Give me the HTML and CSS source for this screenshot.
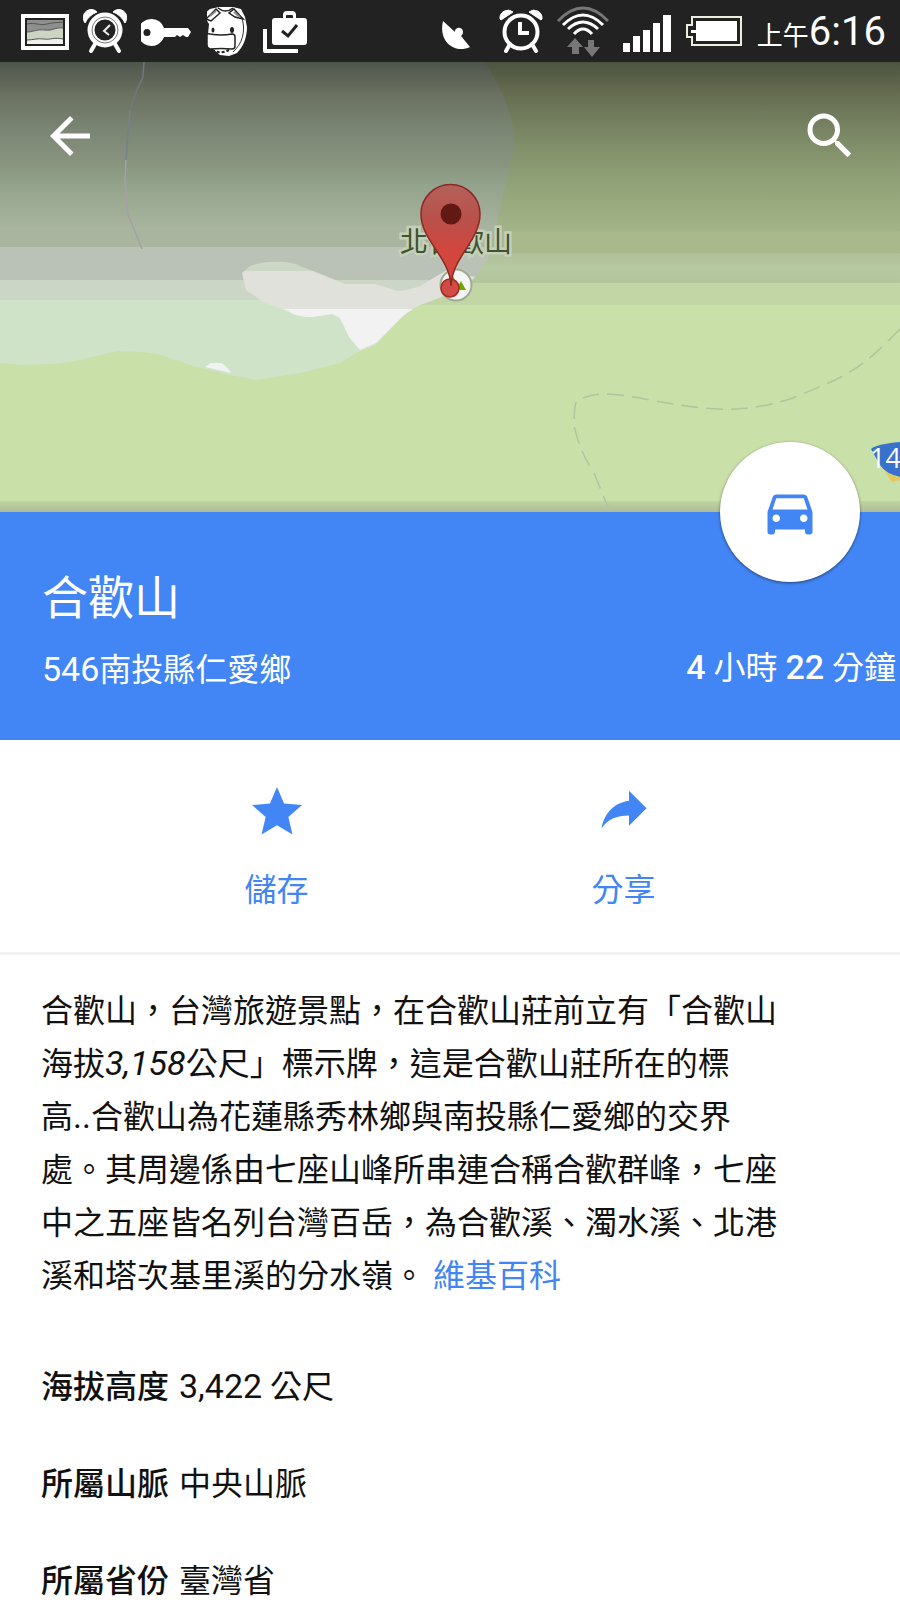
FILE: index.html
```html
<!DOCTYPE html>
<html lang="zh-Hant">
<head>
<meta charset="utf-8">
<meta name="viewport" content="width=device-width, initial-scale=1">
<title>合歡山</title>
<link rel="stylesheet" href="styles.css">
</head>
<body>
<div class="status-bar">
  <div class="status-group">
    <svg width="48" height="62" viewBox="0 0 48 62" aria-hidden="true">
      <rect y="14" width="48" height="36" fill="#fff"/>
      <rect x="4" y="18" width="40" height="28" fill="#222"/>
      <rect x="6" y="20" width="36" height="24" fill="#f0f1ee"/>
      <path d="M6 20h36v8c-8-1-10 3-18 2s-12 2-18 2z" fill="#8d8f8d"/>
      <path d="M6 32c6 0 10-3 18-2s10-3 18-2v11c-9-2-12 1-19 0s-11 1-17 1z" fill="#cbd5c2"/>
      <path d="M6 24c8-2 12 2 20 0s10-1 16-2M6 32c6 0 10-3 18-2s10-3 18-2M6 40c6 0 10-2 17-1s10-2 19 0" fill="none" stroke="#555" stroke-width="1"/>
    </svg>
    <svg width="44" height="62" viewBox="0 0 44 62" aria-hidden="true">
      <path d="M1 21a8 8 0 0 1 13-9 22 22 0 0 0-12 11zM43 21a8 8 0 0 0-13-9 22 22 0 0 1 12 11z" fill="#fff" stroke="#fff" stroke-width="1"/>
      <path d="M12 44l-4 7M32 44l4 7" stroke="#fff" stroke-width="4" stroke-linecap="round"/>
      <circle cx="22" cy="30" r="14" fill="none" stroke="#fff" stroke-width="7"/>
      <circle cx="22" cy="30" r="13" fill="none" stroke="#777" stroke-width="1"/>
      <path d="M27 25l-6 6 5 4" fill="none" stroke="#eee" stroke-width="2"/>
    </svg>
    <svg width="52" height="62" viewBox="0 0 52 62" aria-hidden="true">
      <path fill="#fff" fill-rule="evenodd" d="M11 19a13.500 13.500 0 1 0 12 18h11l2-2 3 2 3-2 3 2h2l3-5-3-4H23a13.500 13.500 0 0 0-12-9zM6 29a3.500 3.500 0 1 1 0 7 3.500 3.500 0 0 1 0-7z"/>
    </svg>
    <svg width="42" height="62" viewBox="0 0 42 62" aria-hidden="true">
      <g transform="translate(-2 0)">
      <path d="M3 34L4 24 1 19 0 13 5 9l9-2 14 0 8 2 4 8 2 10c0 11-4 20-10 26l-8 3-9-1-7-6-4-3z" fill="#fff"/>
      <path d="M37 18c4 14 0 26-9 34" fill="none" stroke="#333" stroke-width="1"/>
      <path d="M1 19L11 9l4 4-9 8zM38 19L29 9l-5 4 6 4zM13 8c5 4 10 4 15 0" fill="none" stroke="#222" stroke-width="1.500"/>
      <path d="M5 16l6-5M29 12l6 5" stroke="#888" stroke-width="2"/>
      <path d="M2 35q0-2 3-1 11 2 22 0 3 0 3 3v9q0 3-3 3-11-1-22 0-3-1-3-4z" fill="#fff" stroke="#222" stroke-width="1.500"/>
      <path d="M7 50c6 3 11 3 17 0" fill="none" stroke="#222" stroke-width="2" stroke-dasharray="3 2"/>
      <ellipse cx="8" cy="30" rx="1.500" ry="2.500" fill="#222"/><ellipse cx="27" cy="30" rx="2" ry="3" fill="#222"/>
      </g>
    </svg>
    <svg width="44" height="62" viewBox="0 0 44 62" aria-hidden="true">
      <path d="M2 29v22h33" fill="none" stroke="#fff" stroke-width="4" stroke-linejoin="round"/>
      <path fill="#fff" fill-rule="evenodd" d="M12 18h8v-3q0-4 4-4h5q4 0 4 4v3h8q3 0 3 3v21q0 3-3 3H12q-3 0-3-3V21q0-3 3-3zm11 0h7v-2q0-1-1-1h-5q-1 0-1 1z"/>
      <path d="M19 31l6 5 9-11" fill="none" stroke="#222" stroke-width="3"/>
    </svg>
  </div>
  <div class="status-group">
    <svg width="44" height="62" viewBox="0 0 44 62" aria-hidden="true">
      <path fill="#fff" d="M2 21l12 11c-1-5 8-6 8 0 0 2-1 3-2 4l9 11C14 54-3 42 2 21z"/>
    </svg>
    <svg width="44" height="62" viewBox="0 0 44 62" aria-hidden="true">
      <path d="M1 19a8 8 0 0 1 13-7L2 20zM43 19a8 8 0 0 0-13-7l12 8z" fill="#fff" stroke="#fff" stroke-width="1"/>
      <path d="M11 44l-4 7M33 44l4 7" stroke="#fff" stroke-width="4" stroke-linecap="round"/>
      <circle cx="22" cy="32" r="16.500" fill="none" stroke="#fff" stroke-width="4"/>
      <path d="M21 22v11h9" fill="none" stroke="#fff" stroke-width="4"/>
    </svg>
    <svg width="52" height="62" viewBox="0 0 52 62" aria-hidden="true">
      <g fill="none" stroke="#fff" stroke-width="3">
        <path d="M1 21q25-26 50 0" stroke="#777"/>
        <path d="M6 25q20-20 40 0M11 29q15-14 30 0M17 34q9-10 18 0"/>
      </g>
      <path fill="#777" d="M18 38l8 9h-4v7h-7v-7h-5zM31 40h6v7h6l-8 10-8-10h4z"/>
    </svg>
    <svg width="48" height="62" viewBox="0 0 48 62" aria-hidden="true">
      <path fill="#fff" d="M0 43h7v9H0zM10 36h7v16h-7zM20 30h7v22h-7zM30 23h7v29h-7zM40 15h8v37h-8z"/>
    </svg>
    <svg width="58" height="62" viewBox="0 0 58 62" aria-hidden="true">
      <path d="M7 17h49v28H7v-8H2V25h5z" fill="none" stroke="#ececdf" stroke-width="2"/>
      <path fill="#fff" d="M11 21h41v20H11v-8H6v-3h5z"/>
    </svg>
    <div class="clock"><span class="clock-period">上午</span><time class="clock-time">6:16</time></div>
  </div>
</div>

<header class="map">
  <svg class="map-canvas" viewBox="0 62 900 450" preserveAspectRatio="xMidYMid slice" role="img" aria-label="地圖">
    <defs>
      <linearGradient id="park" gradientUnits="userSpaceOnUse" x1="0" y1="62" x2="0" y2="512">
        <stop offset="0" stop-color="#4c533f"/><stop offset=".07" stop-color="#666d52"/><stop offset=".15" stop-color="#788463"/>
        <stop offset=".21" stop-color="#86956e"/><stop offset=".31" stop-color="#98a97e"/><stop offset=".376" stop-color="#a3b488"/>
        <stop offset=".377" stop-color="#a9b98b"/><stop offset=".425" stop-color="#a9b98b"/><stop offset=".426" stop-color="#b1c09b"/>
        <stop offset=".455" stop-color="#b5c89f"/><stop offset=".49" stop-color="#b2c69e"/><stop offset=".491" stop-color="#c1d5a5"/>
        <stop offset=".539" stop-color="#c1d5a5"/><stop offset=".54" stop-color="#c9e0a9"/><stop offset=".975" stop-color="#c9e0a9"/>
        <stop offset=".976" stop-color="#c0d4a3"/><stop offset="1" stop-color="#aebc94"/>
      </linearGradient>
      <linearGradient id="valley" gradientUnits="userSpaceOnUse" x1="0" y1="62" x2="0" y2="512">
        <stop offset="0" stop-color="#4e554b"/><stop offset=".07" stop-color="#6a7161"/><stop offset=".15" stop-color="#7a8573"/>
        <stop offset=".23" stop-color="#89957f"/><stop offset=".27" stop-color="#93a28c"/><stop offset=".34" stop-color="#a2af98"/>
        <stop offset=".37" stop-color="#a9b59f"/><stop offset=".411" stop-color="#a9b59f"/><stop offset=".412" stop-color="#bac2b7"/>
        <stop offset=".484" stop-color="#bac2b7"/><stop offset=".485" stop-color="#ccd6c7"/><stop offset=".528" stop-color="#ccd6c7"/>
        <stop offset=".529" stop-color="#cfe3c8"/><stop offset="1" stop-color="#cfe3c8"/>
      </linearGradient>
      <linearGradient id="rock" gradientUnits="userSpaceOnUse" x1="0" y1="62" x2="0" y2="512">
        <stop offset=".464" stop-color="#ccd7c5"/><stop offset=".465" stop-color="#e1e1db"/>
        <stop offset=".548" stop-color="#e1e1db"/><stop offset=".549" stop-color="#f2f2f2"/>
      </linearGradient>
      <linearGradient id="pin" x1="0" y1="0" x2="0" y2="1">
        <stop offset="0" stop-color="#b4615a"/><stop offset=".35" stop-color="#b9504a"/><stop offset=".65" stop-color="#d2463e"/><stop offset="1" stop-color="#d2463e"/>
      </linearGradient>
    </defs>
    <rect y="62" width="900" height="450" fill="url(#park)"/>
    <path fill="url(#valley)" d="M0 62H485Q502 90 506 103 515 128 515 140 513 155 505 185L497 222 488 259 470 283 447 295 420 305Q405 314 400 319L376 345 358 352 340 363 300 373 257 380 230 375 190 365 158 354Q140 351 118 351L70 362Q35 367 0 363z"/>
    <path fill="url(#rock)" d="M242 273L250 266Q262 262 270 262 290 261 300 266L318 273 345 284 375 284 398 291Q410 290 420 286L447 270 475 277Q465 289 447 295L420 305Q405 313 400 319L376 343 360 350 349 337 340 318 332 314 313 317Q295 317 288 311L265 303 246 290zM205 367L211 363 221 363Q227 366 231 373z"/>
    <path fill="none" stroke="#76757a" stroke-width="1.500" d="M144 62L143 77 136 92 130 110"/>
    <path fill="none" stroke="#74828a" stroke-width="1.500" d="M130 110L128 132 126 160"/>
    <path fill="none" stroke="#a2a2a4" stroke-width="1.500" d="M126 160L125 180 127 212 142 249"/>
    <path fill="none" stroke="#b3c49d" stroke-width="1.500" stroke-dasharray="17 8" d="M900 329C860 370 850 375 790 399 740 414 710 411 650 400 600 390 590 394 577 401Q574 404 574 425 579 450 594 473L610 512"/>
    <text class="map-label" x="400" y="252">北合歡山</text>
    <circle cx="456" cy="285" r="15.500" fill="#f5f5f3" stroke="#9fac93" stroke-width="2"/>
    <path d="M452 274l8 16h-16zM461 281l5 9h-10z" fill="#70a500"/>
    <circle cx="450" cy="288" r="9" fill="#d24a44" stroke="#a92724" stroke-width="1.500"/>
    <path d="M451 286C450 257 421 241 421 214A29.500 29.500 0 0 1 480 214C480 241 452 257 451 286z" fill="url(#pin)" stroke="#8c2824" stroke-width="1.500"/>
    <circle cx="451" cy="214" r="10.500" fill="#621813"/>
    <path d="M871 449Q876 444 900 442V477Q886 474 880 465z" fill="#3872cc"/>
    <path d="M884 470l8 12 8-2v-3q-10-1-16-7z" fill="#e8c657"/>
    <text class="route-label" x="870" y="468">14</text>
  </svg>
  <nav class="toolbar">
    <button class="icon-button" type="button" aria-label="返回">
      <svg width="60" height="60" viewBox="0 0 24 24" fill="#fff"><path d="M20 11H7.830l5.590-5.590L12 4l-8 8 8 8 1.410-1.410L7.830 13H20v-2z"/></svg>
    </button>
    <button class="icon-button" type="button" aria-label="搜尋">
      <svg width="60" height="60" viewBox="0 0 24 24" fill="#fff"><path d="M15.500 14h-.79l-.28-.27A6.471 6.471 0 0 0 16 9.500 6.500 6.500 0 1 0 9.500 16c1.610 0 3.090-.59 4.230-1.570l.27.28v.79l5 4.990L20.490 19l-4.990-5zm-6 0C7.010 14 5 11.990 5 9.500S7.010 5 9.500 5 14 7.010 14 9.500 11.990 14 9.500 14z"/></svg>
    </button>
  </nav>
</header>

<main>
  <section class="place">
    <button class="fab" type="button" aria-label="開車路線">
      <svg width="60" height="60" viewBox="0 0 24 24" fill="#4285f4"><path d="M18.920 6.010C18.720 5.420 18.160 5 17.500 5h-11c-.66 0-1.210.42-1.420 1.010L3 12v8c0 .55.45 1 1 1h1c.55 0 1-.45 1-1v-1h12v1c0 .55.45 1 1 1h1c.55 0 1-.45 1-1v-8l-2.080-5.990zM6.500 16c-.83 0-1.500-.67-1.500-1.500S5.670 13 6.500 13s1.500.67 1.500 1.500S7.330 16 6.500 16zm11 0c-.83 0-1.500-.67-1.500-1.500s.67-1.500 1.500-1.500 1.500.67 1.500 1.500-.67 1.500-1.500 1.500zM5 11l1.500-4.500h11L19 11H5z"/></svg>
    </button>
    <h1 class="place-name">合歡山</h1>
    <div class="place-row">
      <p class="address"><span class="num">546</span>南投縣仁愛鄉</p>
      <p class="duration"><b class="num">4</b> 小時 <b class="num">22</b> 分鐘</p>
    </div>
  </section>

  <div class="actions">
    <button class="action" type="button">
      <svg width="60" height="60" viewBox="0 0 24 24" fill="#4285f4"><path d="M12 17.270L18.180 21l-1.640-7.030L22 9.240l-7.190-.61L12 2 9.190 8.630 2 9.240l5.460 4.730L5.820 21z"/></svg>
      <span>儲存</span>
    </button>
    <button class="action" type="button">
      <svg width="60" height="60" viewBox="0 1.500 24 24" fill="#4285f4"><path d="M14 9V5l7 7-7 7v-4.100c-5 0-8.500 1.600-11 5.100 1-5 4-10 11-11z"/></svg>
      <span>分享</span>
    </button>
  </div>

  <article class="details">
    <p class="summary">合歡山，台灣旅遊景點，在合歡山莊前立有「合歡山<br>海拔<i class="num">3,158</i>公尺」標示牌，這是合歡山莊所在的標<br>高<span class="num">..</span>合歡山為花蓮縣秀林鄉與南投縣仁愛鄉的交界<br>處。其周邊係由七座山峰所串連合稱合歡群峰，七座<br>中之五座皆名列台灣百岳，為合歡溪、濁水溪、北港<br>溪和塔次基里溪的分水嶺。 <a class="link" href="#wiki">維基百科</a></p>
    <dl class="facts">
      <div class="fact"><dt>海拔高度</dt><dd><span class="num">3,422</span> 公尺</dd></div>
      <div class="fact"><dt>所屬山脈</dt><dd>中央山脈</dd></div>
      <div class="fact"><dt>所屬省份</dt><dd>臺灣省</dd></div>
    </dl>
  </article>
</main>
</body>
</html>
```
FILE: styles.css
```css
* {
  box-sizing: border-box;
}

body,
h1,
p,
dl,
dd {
  margin: 0;
}

body {
  background: #fff;
  color: #111;
  font-family: Roboto, "Noto Sans CJK TC", sans-serif;
  font-size: 32px;
  line-height: 53px;
  overflow-x: hidden;
}

button {
  padding: 0;
  border: 0;
  background: none;
  font: inherit;
  cursor: pointer;
}

svg {
  display: block;
  flex: none;
}

.num {
  font-size: 34px;
  line-height: 1;
}

/* Status bar */
.status-bar {
  display: flex;
  justify-content: space-between;
  height: 62px;
  padding: 0 14px 0 21px;
  background: #222;
  color: #fff;
}

.status-group {
  display: flex;
  gap: 14px;
}

.clock {
  line-height: 68px;
  white-space: nowrap;
}

.clock-period {
  font-size: 26px;
}

.clock-time {
  font-size: 40px;
  line-height: 1;
}

/* Map header */
.map {
  position: relative;
  height: 450px;
  background: #c9e0a9;
}

.map-canvas {
  width: 100%;
  height: 100%;
}

.map-label {
  fill: #405330;
  stroke: #c5d0b9;
  stroke-width: 5px;
  paint-order: stroke;
  font-size: 28px;
}

.route-label {
  fill: #fff;
  font-family: "Open Sans", sans-serif;
  font-size: 27px;
}

.toolbar {
  position: absolute;
  inset: 0 0 auto;
  display: flex;
  justify-content: space-between;
  padding: 44px 40px;
}

.icon-button {
  width: 60px;
  height: 60px;
}

/* Place banner */
.place {
  position: relative;
  padding: 58px 4px 43px 42px;
  background: #4285f4;
  color: #fff;
}

.fab {
  position: absolute;
  top: -70px;
  right: 40px;
  display: grid;
  place-items: center;
  width: 140px;
  height: 140px;
  border-radius: 50%;
  background: #fff;
  box-shadow: 0 1px 3px rgba(0, 0, 0, 0.5);
}

.place-name {
  font-size: 46px;
  font-weight: 400;
  line-height: 56px;
}

.place-row {
  display: flex;
  align-items: flex-start;
  justify-content: space-between;
  margin-top: 17px;
  line-height: 54px;
}

.duration {
  line-height: 50px;
  white-space: nowrap;
}

.duration .num {
  font-weight: 500;
}

/* Actions */
.actions {
  display: flex;
  padding: 42px 103px 35px;
  border-bottom: 3px solid #f2f2f2;
}

.action {
  display: flex;
  flex: 1;
  flex-direction: column;
  align-items: center;
  gap: 22px;
  color: #4285f4;
}

/* Details */
.details {
  padding: 30px 41px 0;
}

.link {
  color: #4285f4;
  text-decoration: none;
}

.facts {
  display: grid;
  gap: 44px;
  margin-top: 58px;
}

.fact {
  display: flex;
  gap: 10px;
}

.fact dt {
  font-weight: 500;
}
```
